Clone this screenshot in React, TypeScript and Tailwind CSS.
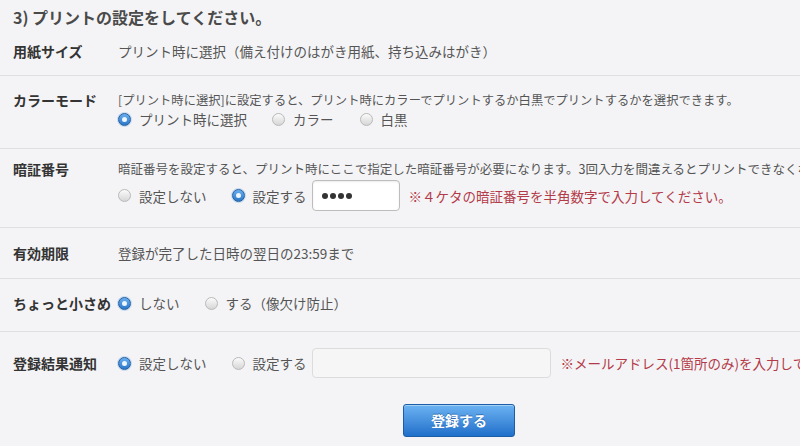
import type { ReactNode } from 'react'

const font = { fontFamily: '"Noto Sans CJK JP", "Noto Sans", sans-serif' }

function Radio({ checked, label, className = '' }: { checked?: boolean; label: string; className?: string }) {
  return (
    <label className={`flex items-center gap-[8px] ${className}`}>
      {checked ? (
        <span className="flex h-[13px] w-[13px] shrink-0 items-center justify-center rounded-full border border-[#23609f] bg-gradient-to-b from-[#69aef0] to-[#2a78c8] shadow-[0_0_0_1px_rgba(120,170,230,0.35)]">
          <span className="h-[5px] w-[5px] rounded-full bg-[#eef6ff]" />
        </span>
      ) : (
        <span className="h-[13px] w-[13px] shrink-0 rounded-full border border-[#b9b9b9] bg-gradient-to-b from-[#fbfbfb] to-[#d6d6d6]" />
      )}
      <span className="whitespace-nowrap text-[13.5px] leading-[20px] text-[#555]">{label}</span>
    </label>
  )
}

function Row({
  label,
  children,
  className = '',
  border = true,
  center = false,
}: {
  label: string
  children: ReactNode
  className?: string
  border?: boolean
  center?: boolean
}) {
  return (
    <div
      className={`flex ${center ? 'items-center' : 'items-start'} ${border ? 'border-b border-[#dfdfe2]' : ''} ${className}`}
    >
      <div className="w-[118px] shrink-0 whitespace-nowrap pl-[13px] text-[14px] font-bold leading-[18px] text-[#333]">
        {label}
      </div>
      <div className="min-w-0 flex-1">{children}</div>
    </div>
  )
}

export default function App() {
  return (
    <div className="h-[446px] w-[800px] overflow-hidden bg-[#f4f4f6]" style={font}>
      <div className="w-[918px]">
        <h2 className="flex h-[34px] items-center pl-[13px] text-[16px] font-bold text-[#4a4a4a]">
          3) プリントの設定をしてください。
        </h2>

        <Row label="用紙サイズ" className="pb-[15px] pt-[8px]">
          <p className="whitespace-nowrap text-[13.5px] leading-[18px] text-[#555]">
            プリント時に選択（備え付けのはがき用紙、持ち込みはがき）
          </p>
        </Row>

        <Row label="カラーモード" className="pb-[19px] pt-[15px]">
          <p className="whitespace-nowrap text-[12.3px] leading-[18px] text-[#555]">
            [プリント時に選択]に設定すると、プリント時にカラーでプリントするか白黒でプリントするかを選択できます。
          </p>
          <div className="flex items-center">
            <Radio checked label="プリント時に選択" />
            <Radio label="カラー" className="ml-[25px]" />
            <Radio label="白黒" className="ml-[26px]" />
          </div>
        </Row>

        <Row label="暗証番号" className="pb-[16px] pt-[11px]">
          <p className="whitespace-nowrap text-[12.5px] leading-[18px] text-[#555]">
            暗証番号を設定すると、プリント時にここで指定した暗証番号が必要になります。3回入力を間違えるとプリントできなくなります。
          </p>
          <div className="mt-[2px] flex items-center">
            <Radio label="設定しない" />
            <Radio checked label="設定する" className="ml-[25px]" />
            <div className="ml-[5px] flex h-[31px] w-[88px] items-center gap-[2px] rounded-[4px] border border-[#bdbdbd] bg-white pl-[9px] shadow-[inset_0_1px_2px_rgba(0,0,0,0.08)]">
              <span className="h-[6px] w-[6px] rounded-full bg-[#333]" />
              <span className="h-[6px] w-[6px] rounded-full bg-[#333]" />
              <span className="h-[6px] w-[6px] rounded-full bg-[#333]" />
              <span className="h-[6px] w-[6px] rounded-full bg-[#333]" />
            </div>
            <span className="ml-[9px] whitespace-nowrap text-[13.5px] leading-[20px] text-[#b33a48]">
              ※４ケタの暗証番号を半角数字で入力してください。
            </span>
          </div>
        </Row>

        <Row label="有効期限" className="pb-[16px] pt-[16px]">
          <p className="whitespace-nowrap text-[13.5px] leading-[18px] text-[#555]">
            登録が完了した日時の翌日の23:59まで
          </p>
        </Row>

        <Row label="ちょっと小さめ" center className="pb-[18px] pt-[14px]">
          <div className="flex items-center">
            <Radio checked label="しない" />
            <Radio label="する（像欠け防止）" className="ml-[25px]" />
          </div>
        </Row>

        <Row label="登録結果通知" center border={false} className="pb-[16px] pt-[16px]">
          <div className="flex items-center">
            <Radio checked label="設定しない" />
            <Radio label="設定する" className="ml-[25px]" />
            <input
              type="text"
              disabled
              className="ml-[5px] h-[30px] w-[239px] rounded-[4px] border border-[#dcdcdc] bg-[#f6f6f7]"
            />
            <span className="ml-[10px] whitespace-nowrap text-[13.5px] leading-[20px] text-[#b33a48]">
              ※メールアドレス(1箇所のみ)を入力してください。
            </span>
          </div>
        </Row>

        <div className="mt-[10px] flex justify-center">
          <button
            type="button"
            className="h-[33px] w-[112px] rounded-[3px] border border-[#1b5ea6] bg-gradient-to-b from-[#6cb3f2] to-[#1f6fca] text-[14px] font-bold text-white [text-shadow:0_-1px_0_rgba(0,40,100,0.4)] shadow-[inset_0_1px_0_rgba(255,255,255,0.4)]"
          >
            登録する
          </button>
        </div>
      </div>
    </div>
  )
}
